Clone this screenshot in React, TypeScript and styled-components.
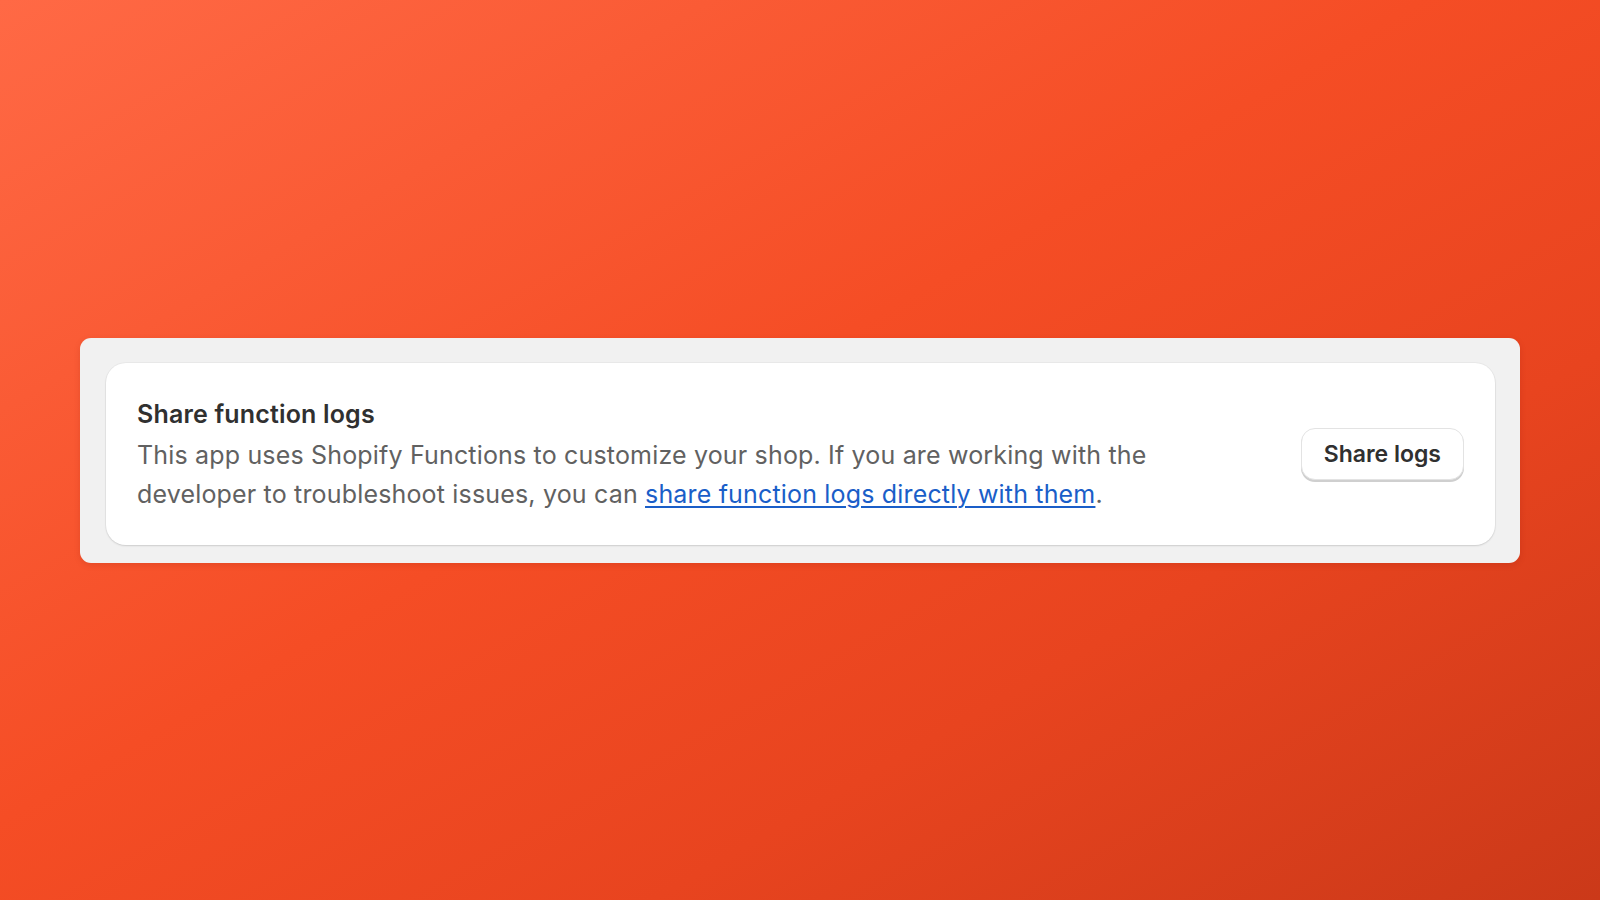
import styled, { createGlobalStyle } from 'styled-components';

const GlobalStyle = createGlobalStyle`
	html, body {
		margin: 0;
		padding: 0;
	}
	body {
		font-family: Inter, 'Noto Sans', sans-serif;
		-webkit-font-smoothing: antialiased;
	}
`;

const Page = styled.main`
	width: 1600px;
	height: 900px;
	display: flex;
	align-items: center;
	justify-content: center;
	background: linear-gradient(150deg, #ff6945 0%, #f54d25 45%, #e8441f 70%, #cb3919 100%);
`;

const Frame = styled.div`
	width: 1440px;
	box-sizing: border-box;
	padding: 25px 25px 18px 26px;
	background: #f1f1f1;
	border-radius: 11px;
	box-shadow: 0 2px 6px rgba(120, 20, 0, 0.15);
`;

const Card = styled.section`
	display: flex;
	align-items: flex-start;
	justify-content: space-between;
	column-gap: 32px;
	padding: 34px 31px 31px 31px;
	background: #ffffff;
	border-radius: 20px;
	box-shadow: 0 1px 2px rgba(0, 0, 0, 0.12), 0 0 0 1px rgba(0, 0, 0, 0.03);
`;

const Text = styled.div`
	max-width: 1080px;
	letter-spacing: 0.17px;
`;

const Title = styled.h2`
	margin: 0 0 5px;
	font-size: 25px;
	line-height: 34px;
	font-weight: 600;
	color: #303030;
`;

const Body = styled.p`
	margin: 0;
	font-size: 25px;
	line-height: 39px;
	font-weight: 400;
	color: #616161;
`;

const Link = styled.a`
	color: #1a5ec8;
	text-decoration: underline;
	text-underline-offset: 3px;
	text-decoration-thickness: 2px;
`;

const Button = styled.button`
	flex: none;
	margin-top: 31px;
	height: 52px;
	padding: 0 22px;
	font-family: inherit;
	font-size: 23px;
	font-weight: 600;
	color: #303030;
	background: #ffffff;
	border: 1px solid #e3e3e3;
	border-radius: 14px;
	box-shadow: 0 2px 0 #cfcfcf;
	cursor: pointer;
`;

const App = () => (
	<>
		<GlobalStyle />
		<Page>
			<Frame>
				<Card>
					<Text>
						<Title>Share function logs</Title>
						<Body>
							This app uses Shopify Functions to customize your shop. If you are working with the developer to
							troubleshoot issues, you can <Link href="#">share function logs directly with them</Link>.
						</Body>
					</Text>
					<Button>Share logs</Button>
				</Card>
			</Frame>
		</Page>
	</>
);

export default App;
